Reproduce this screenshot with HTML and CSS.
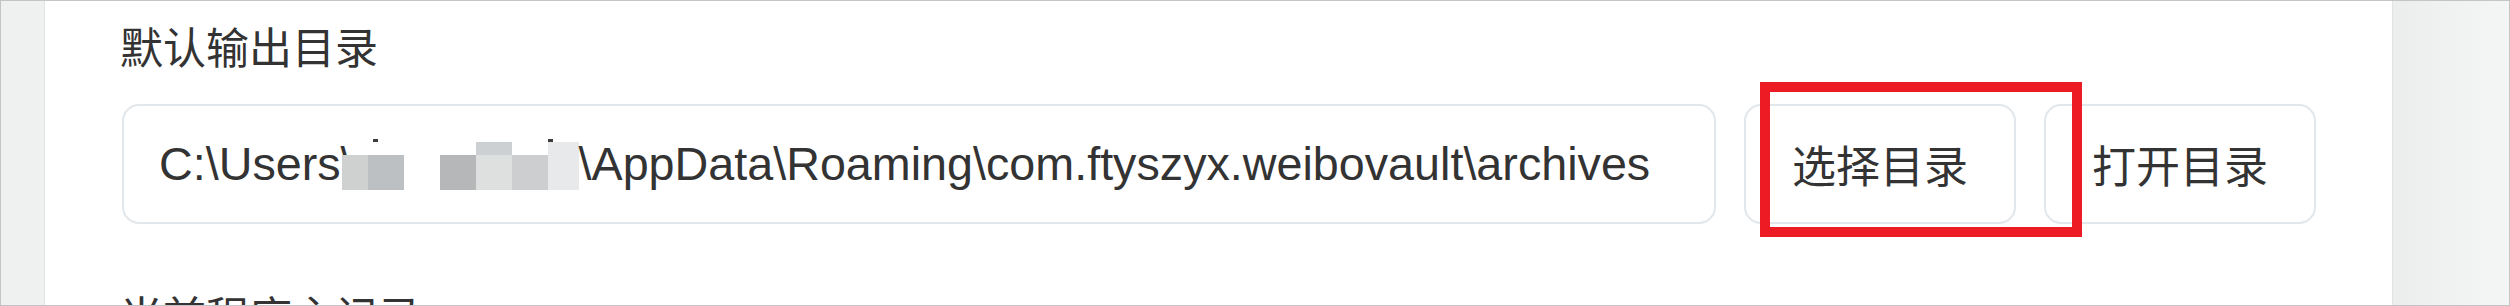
FILE: index.html
```html
<!DOCTYPE html>
<html lang="zh-CN">

<head>
    <meta charset="UTF-8">
    <meta name="viewport" content="width=device-width, initial-scale=1.0">
    <title>设置</title>
    <link rel="stylesheet" href="styles.css">
</head>

<body>
    <div class="window">
        <div class="gutter gutter-left"></div>
        <div class="panel">
            <div class="setting">
                <div class="setting-label">默认输出目录</div>
                <div class="setting-row">
                    <div class="path-field">C:\Users\<span class="mosaic">
                            <span class="dot dot-a"></span>
                            <span class="dot dot-b"></span>
                            <span class="px px-1"></span>
                            <span class="px px-2"></span>
                            <span class="px px-3"></span>
                            <span class="px px-4"></span>
                            <span class="px px-5"></span>
                            <span class="px px-6"></span>
                            <span class="px px-7"></span>
                        </span>\AppData\Roaming\com.ftyszyx.weibovault\archives</div>
                    <button class="btn">选择目录</button>
                    <button class="btn">打开目录</button>
                    <!-- 截图标注框 -->
                    <div class="mark"></div>
                </div>
            </div>
            <div class="setting">
                <div class="setting-label">当前程序主记录</div>
            </div>
        </div>
        <div class="gutter gutter-right"></div>
    </div>
</body>

</html>
```

FILE: styles.css
```css
body {
    margin: 0;
    background-color: #ffffff;
    color: #333333;
    font-family: "Liberation Sans", "Noto Sans CJK SC", sans-serif;
}

.window {
    width: 2510px;
    height: 306px;
    box-sizing: border-box;
    border: 1px solid #c4c4c4;
    display: flex;
    overflow: hidden;
}

.gutter {
    flex-shrink: 0;
}

.gutter-left {
    width: 43px;
    background-color: #eff1f1;
    border-right: 1px solid #e1e4e4;
}

.gutter-right {
    width: 116px;
    background-image: linear-gradient(90deg, #eceeee 0%, #f4f6f6 100%);
    border-left: 1px solid #dfe3e3;
}

.panel {
    flex-grow: 1;
    padding: 0 76px 0 75px;
    background-color: #ffffff;
}

.setting-label {
    font-family: "Noto Sans CJK SC", sans-serif;
    font-size: 43px;
    line-height: 43px;
    padding-top: 23px;
    color: #333333;
}

.setting-row {
    position: relative;
    display: flex;
    gap: 28px;
    height: 120px;
    margin: 37px 0 0 2px;
}

.setting+.setting .setting-label {
    padding-top: 69px;
}

.path-field {
    flex-grow: 1;
    display: flex;
    align-items: center;
    padding: 0 35px;
    border: 2px solid #e1e7eb;
    border-radius: 17px;
    font-family: "Liberation Sans", sans-serif;
    font-size: 46.7px;
    white-space: nowrap;
    color: #333333;
}

.mosaic {
    display: inline-grid;
    grid-template-columns: 26px 36px 36px 36px 36px 36px 31px;
    grid-template-rows: 3px 13px 35px;
    margin-left: -12px;
    vertical-align: -17px;
    overflow: hidden;
}

.px-1 { grid-column: 1; grid-row: 3; background-color: #cfd0d0; }
.px-2 { grid-column: 2; grid-row: 3; background-color: #bdc0c2; }
.px-3 { grid-column: 4; grid-row: 3; background-color: #b6b7b8; }
.px-4 { grid-column: 5; grid-row: 2; background-color: #ccd0d3; }
.px-5 { grid-column: 5; grid-row: 3; background-color: #dee0e0; }
.px-6 { grid-column: 6; grid-row: 3; background-color: #cdced0; }
.px-7 { grid-column: 7; grid-row: 2 / 4; background-color: #e8e9ea; }

.dot {
    grid-row: 1;
    width: 5px;
    background-color: #3c3c3c;
}

.dot-a {
    grid-column: 2;
    margin-left: 5px;
}

.dot-b {
    grid-column: 7;
}

.btn {
    flex-shrink: 0;
    width: 272px;
    padding: 0;
    border: 2px solid #e1e7eb;
    border-radius: 17px;
    background-color: #ffffff;
    font-family: "Noto Sans CJK SC", sans-serif;
    font-size: 44px;
    color: #333333;
}

.mark {
    position: absolute;
    left: 1638px;
    top: -22px;
    width: 322px;
    height: 155px;
    box-sizing: border-box;
    border: 10px solid #ed1c24;
    pointer-events: none;
}
```
